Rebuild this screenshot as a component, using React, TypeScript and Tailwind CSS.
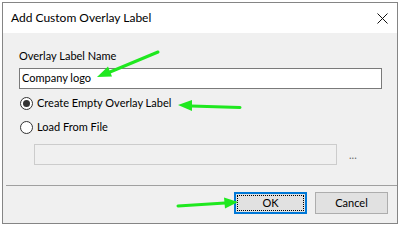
export default function App() {
  return (
    <div className="relative w-[400px] h-[227px] bg-white pt-[2px] pl-[2px] font-['Lato',sans-serif] text-[11px] text-black">
      <div className="w-[396px] h-[222px] border border-[#858585] bg-[#f0f0f0] flex flex-col">
        {/* Title bar */}
        <div className="h-[30px] bg-white flex items-center justify-between pl-[8px] pr-[9px]">
          <span className="text-[12px]">Add Custom Overlay Label</span>
          <svg width="11" height="11" viewBox="0 0 11 11">
            <path d="M0.5 0.5 L10.5 10.5 M10.5 0.5 L0.5 10.5" stroke="#111" strokeWidth="1" />
          </svg>
        </div>

        {/* Body */}
        <div className="flex flex-col pl-[16px] pr-[15px] pt-[15px]">
          <div className="h-[16px] leading-[16px]">Overlay Label Name</div>
          <div className="mt-[4px] h-[21px] w-[363px] border border-[#7a7a7a] bg-white flex items-center px-[2px]">
            Company logo
          </div>

          <div className="mt-[6px] h-[16px] flex items-center">
            <span className="ml-[1px] w-[13px] h-[13px] rounded-full border border-[#333] bg-white flex items-center justify-center">
              <span className="w-[7px] h-[7px] rounded-full bg-[#333]" />
            </span>
            <span className="ml-[4px]">Create Empty Overlay Label</span>
          </div>

          <div className="mt-[8px] h-[16px] flex items-center">
            <span className="ml-[1px] w-[13px] h-[13px] rounded-full border border-[#333] bg-white" />
            <span className="ml-[4px]">Load From File</span>
          </div>

          <div className="mt-[9px] ml-[15px] flex items-center">
            <div className="w-[303px] h-[21px] border border-[#cccccc] bg-[#f0f0f0]" />
            <span className="ml-[12px] text-[#6d6d6d] leading-none">...</span>
          </div>
        </div>

        <div className="mt-[20px] ml-[3px] h-px bg-[#a0a0a0]" />

        {/* Buttons */}
        <div className="mt-[6px] flex justify-end gap-[8px] pr-[9px]">
          <button className="w-[73px] h-[22px] border-2 border-[#0078d7] bg-[#e1e1e1] p-px">
            <span className="flex h-full w-full items-center justify-center border border-dotted border-black">OK</span>
          </button>
          <button className="w-[73px] h-[22px] border border-[#adadad] bg-[#e1e1e1] flex items-center justify-center">
            Cancel
          </button>
        </div>
      </div>

      {/* Annotation arrows */}
      <svg className="absolute inset-0 pointer-events-none" width="400" height="227" viewBox="0 0 400 227">
        <g stroke="#1fe81f" strokeWidth="3" strokeLinecap="round" fill="#1fe81f">
          <line x1="158" y1="52" x2="110" y2="72" />
          <polygon points="97,77 112,76.5 108,66.5" stroke="none" />
          <line x1="240" y1="107.5" x2="191" y2="106" />
          <polygon points="178,105 192,100 192,111" stroke="none" />
          <line x1="178" y1="206" x2="225" y2="203" />
          <polygon points="238,202 224,197.5 225,208.5" stroke="none" />
        </g>
      </svg>
    </div>
  )
}
